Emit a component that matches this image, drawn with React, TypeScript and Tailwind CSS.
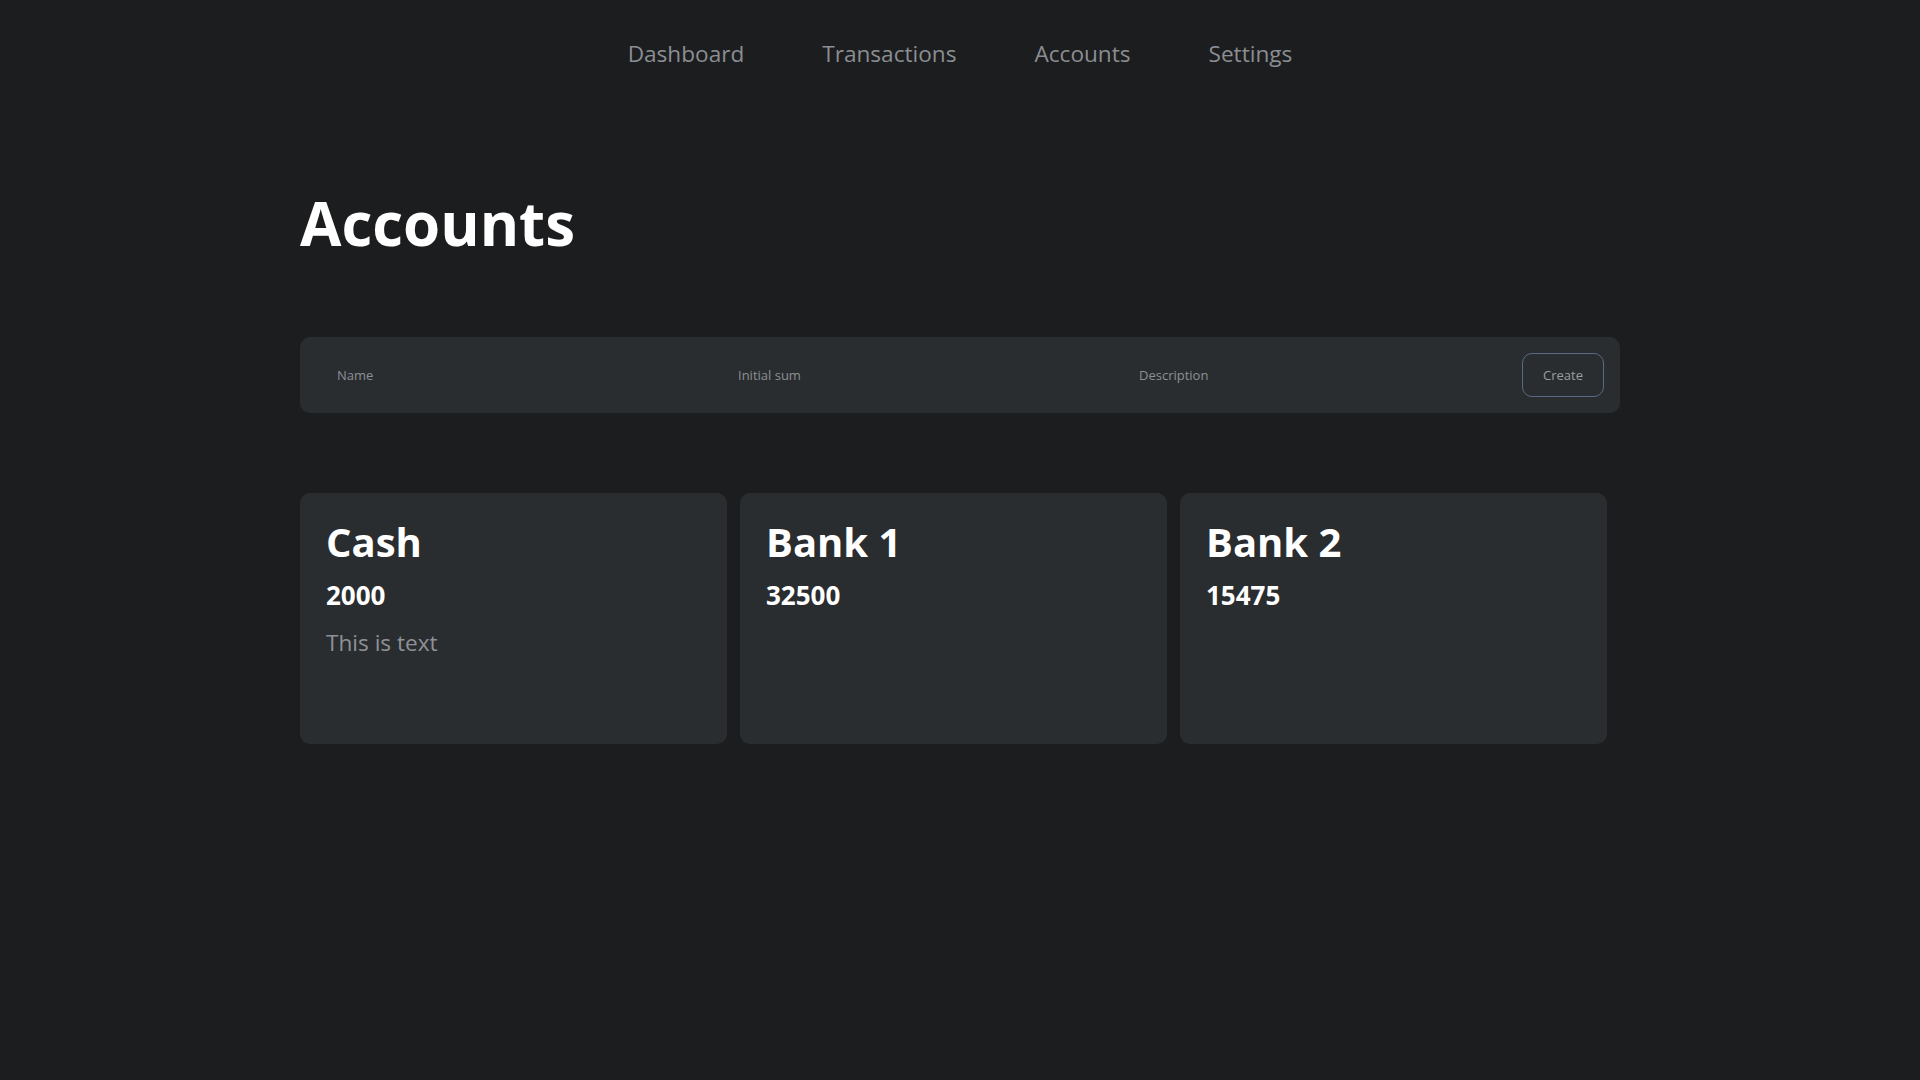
import React from "react";

const links = ["Dashboard", "Transactions", "Accounts", "Settings"];

const accounts = [
  { name: "Cash", sum: 2000, description: "This is text" },
  { name: "Bank 1", sum: 32500, description: "" },
  { name: "Bank 2", sum: 15475, description: "" },
];

const App = () => {
  return (
    <div
      className="min-h-screen w-full bg-[#1c1d1f] text-white"
      style={{ fontFamily: '"Open Sans", "Noto Sans", sans-serif' }}
    >
      <nav className="flex justify-center gap-[78px] pt-[39px]">
        {links.map((link) => (
          <a
            key={link}
            href="#"
            className="text-[22.6px] leading-[30px] text-[#8b8e92] hover:text-white transition"
          >
            {link}
          </a>
        ))}
      </nav>

      <main className="mx-auto w-[1320px]">
        <h1 className="mt-[124px] text-6xl leading-none font-bold">Accounts</h1>

        <form
          className="mt-[84px] flex h-[76px] items-center rounded-[10px] bg-[#2a2d30] pl-[25px] pr-4"
          onSubmit={(e) => e.preventDefault()}
        >
          <div className="mt-[2px] flex gap-3">
            <input
              placeholder="Name"
              className="w-[389px] bg-transparent px-3 py-2 text-[13px] text-white outline-none placeholder:text-[#8c8f94]"
            />
            <input
              placeholder="Initial sum"
              className="w-[389px] bg-transparent px-3 py-2 text-[13px] text-white outline-none placeholder:text-[#8c8f94]"
            />
            <input
              placeholder="Description"
              className="w-[389px] bg-transparent px-3 py-2 text-[13px] text-white outline-none placeholder:text-[#8c8f94]"
            />
          </div>
          <button
            type="submit"
            className="ml-auto h-[44px] w-[82px] rounded-[10px] border border-[#5b6a84] pt-[2px] text-[13px] text-[#9a9da1]"
          >
            Create
          </button>
        </form>

        <div className="mt-[80px] flex gap-[13px]">
          {accounts.map((acc) => (
            <div
              key={acc.name}
              className="h-[251px] w-[427px] rounded-[10px] bg-[#2a2d30] px-[26px] pt-[25px]"
            >
              <h2 className="text-[40px] leading-[48px] font-bold">{acc.name}</h2>
              <h3 className="mt-[13px] text-[26px] leading-[32px] font-bold">{acc.sum}</h3>
              {acc.description && (
                <p className="mt-[17px] text-[22.6px] leading-[30px] text-[#8e9196]">
                  {acc.description}
                </p>
              )}
            </div>
          ))}
        </div>
      </main>
    </div>
  );
};

export default App;
